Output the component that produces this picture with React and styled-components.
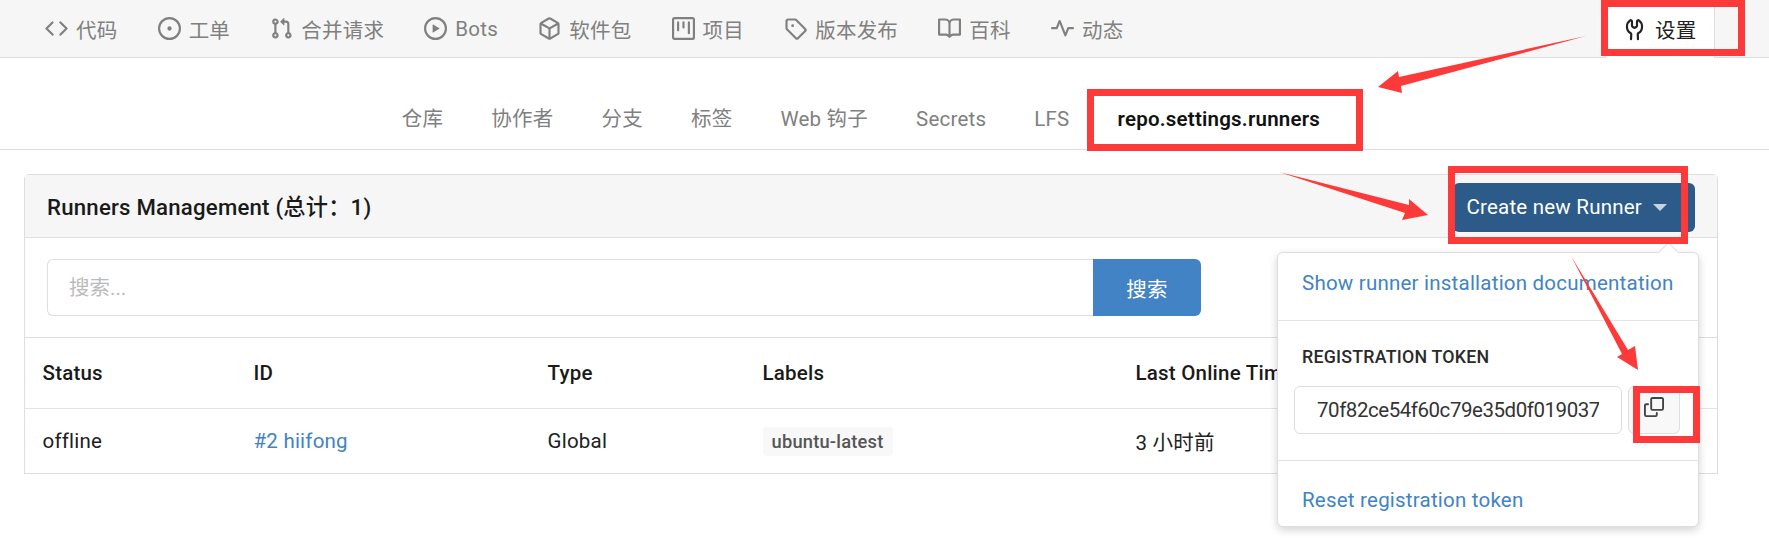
import styled, { createGlobalStyle } from "styled-components";

const FONT = `Roboto, "Noto Sans CJK SC", sans-serif`;
const RED = "#fd3a3a";

const Global = createGlobalStyle`
  * { box-sizing: border-box; }
  html, body { margin: 0; padding: 0; background: #fff; overflow: hidden; }
  body { font-family: ${FONT}; font-size: 20.5px; letter-spacing: 0.22px; color: #212121; }
`;

// octicons, 16 grid
const paths = {
  code: "M4.72 3.22a.75.75 0 011.06 1.06L2.06 8l3.72 3.72a.75.75 0 11-1.06 1.06L.47 8.53a.75.75 0 010-1.06l4.25-4.25zm6.56 0a.75.75 0 10-1.06 1.06L13.94 8l-3.72 3.72a.75.75 0 101.06 1.06l4.25-4.25a.75.75 0 000-1.06l-4.25-4.25z",
  issue: "M8 9.5a1.5 1.5 0 100-3 1.5 1.5 0 000 3zM8 0a8 8 0 100 16A8 8 0 008 0zM1.5 8a6.5 6.5 0 1113 0 6.5 6.5 0 01-13 0z",
  pull: "M7.177 3.073L9.573.677A.25.25 0 0110 .854v4.792a.25.25 0 01-.427.177L7.177 3.427a.25.25 0 010-.354zM3.75 2.5a.75.75 0 100 1.5.75.75 0 000-1.5zm-2.25.75a2.25 2.25 0 113 2.122v5.256a2.251 2.251 0 11-1.5 0V5.372A2.25 2.25 0 011.5 3.25zM11 2.5h-1V4h1a1 1 0 011 1v5.628a2.251 2.251 0 101.5 0V5A2.5 2.5 0 0011 2.5zm1 10.25a.75.75 0 111.5 0 .75.75 0 01-1.5 0zM3.75 12a.75.75 0 100 1.5.75.75 0 000-1.5z",
  play: "M1.5 8a6.5 6.5 0 1113 0 6.5 6.5 0 01-13 0zM8 0a8 8 0 100 16A8 8 0 008 0zM6.379 5.227A.25.25 0 006 5.442v5.117a.25.25 0 00.379.214l4.264-2.559a.25.25 0 000-.428L6.379 5.227z",
  pack: "M8.878.392a1.75 1.75 0 00-1.756 0l-5.25 3.045A1.75 1.75 0 001 4.951v6.098c0 .624.332 1.2.872 1.514l5.25 3.045a1.75 1.75 0 001.756 0l5.25-3.045c.54-.313.872-.89.872-1.514V4.951c0-.624-.332-1.201-.872-1.514L8.878.392zM7.875 1.69a.25.25 0 01.25 0l4.63 2.685L8 7.133 3.245 4.375l4.63-2.685zM2.5 5.677v5.372c0 .09.047.171.125.216l4.625 2.683V8.432L2.5 5.677zm6.25 8.271l4.625-2.683a.25.25 0 00.125-.216V5.677L8.75 8.432v5.516z",
  project: "M1.75 0A1.75 1.75 0 000 1.75v12.5C0 15.216.784 16 1.75 16h12.5A1.75 1.75 0 0016 14.25V1.75A1.75 1.75 0 0014.25 0H1.75zM1.5 1.75a.25.25 0 01.25-.25h12.5a.25.25 0 01.25.25v12.5a.25.25 0 01-.25.25H1.75a.25.25 0 01-.25-.25V1.75zM11.75 3a.75.75 0 00-.75.75v7.5a.75.75 0 001.5 0v-7.5a.75.75 0 00-.75-.75zm-8.25.75a.75.75 0 011.5 0v5.5a.75.75 0 01-1.5 0v-5.5zM8 3a.75.75 0 00-.75.75v3.5a.75.75 0 001.5 0v-3.5A.75.75 0 008 3z",
  tag: "M2.5 7.775V2.75a.25.25 0 01.25-.25h5.025a.25.25 0 01.177.073l6.25 6.25a.25.25 0 010 .354l-5.025 5.025a.25.25 0 01-.354 0l-6.25-6.25a.25.25 0 01-.073-.177zm-1.5 0V2.75C1 1.784 1.784 1 2.75 1h5.025c.464 0 .91.184 1.238.513l6.25 6.25a1.75 1.75 0 010 2.474l-5.026 5.026a1.75 1.75 0 01-2.474 0l-6.25-6.25A1.75 1.75 0 011 7.775zM6 5a1 1 0 100 2 1 1 0 000-2z",
  book: "M0 1.75A.75.75 0 01.75 1h4.253c1.227 0 2.317.59 3 1.501A3.744 3.744 0 0111.006 1h4.245a.75.75 0 01.75.75v10.5a.75.75 0 01-.75.75h-4.507a2.25 2.25 0 00-1.591.659l-.622.621a.75.75 0 01-1.06 0l-.622-.621A2.25 2.25 0 005.258 13H.75a.75.75 0 01-.75-.75V1.75zm8.755 3a2.25 2.25 0 012.25-2.25H14.5v9h-3.757c-.71 0-1.4.201-1.992.572l.004-7.322zm-1.504 7.324l.004-5.073-.002-2.253A2.25 2.25 0 005.003 2.5H1.5v9h3.757a3.75 3.75 0 011.994.574z",
  pulse: "M6 2a.75.75 0 01.696.471L10 10.731l1.304-3.26A.75.75 0 0112 7h3.25a.75.75 0 010 1.5h-2.742l-1.812 4.528a.75.75 0 01-1.392 0L6 4.77 4.696 8.03A.75.75 0 014 8.5H.75a.75.75 0 010-1.5h2.742l1.812-4.529A.75.75 0 016 2z",
  tools: "M5.433 2.304A4.494 4.494 0 003.5 6c0 1.598.832 3.002 2.09 3.802.518.328.929.923.902 1.64v.008l-.164 3.337a.75.75 0 11-1.498-.073l.163-3.33c.002-.085-.05-.216-.207-.316A5.996 5.996 0 012 6a5.994 5.994 0 012.567-4.92 1.482 1.482 0 011.673-.04c.462.296.76.827.76 1.423v2.82c0 .082.041.16.11.206l.75.51a.25.25 0 00.28 0l.75-.51A.25.25 0 009 5.282V2.463c0-.596.298-1.127.76-1.423a1.482 1.482 0 011.673.04A5.994 5.994 0 0114 6a5.996 5.996 0 01-2.786 5.068c-.157.1-.209.23-.207.315l.163 3.33a.75.75 0 11-1.498.074l-.164-3.345c-.027-.717.384-1.312.902-1.64A4.496 4.496 0 0012.5 6a4.494 4.494 0 00-1.933-3.696c-.024.017-.067.067-.067.16v2.818a1.75 1.75 0 01-.767 1.448l-.75.51a1.75 1.75 0 01-1.966 0l-.75-.51A1.75 1.75 0 015.5 5.282V2.463c0-.092-.043-.142-.067-.159z",
  copy: "M0 6.75C0 5.784.784 5 1.75 5h1.5a.75.75 0 010 1.5h-1.5a.25.25 0 00-.25.25v7.5c0 .138.112.25.25.25h7.5a.25.25 0 00.25-.25v-1.5a.75.75 0 011.5 0v1.5A1.75 1.75 0 019.25 16h-7.5A1.75 1.75 0 010 14.25v-7.5zM5 1.75C5 .784 5.784 0 6.75 0h7.5C15.216 0 16 .784 16 1.75v7.5A1.75 1.75 0 0114.25 11h-7.5A1.75 1.75 0 015 9.25v-7.5zm1.75-.25a.25.25 0 00-.25.25v7.5c0 .138.112.25.25.25h7.5a.25.25 0 00.25-.25v-7.5a.25.25 0 00-.25-.25h-7.5z",
};

function Octicon({ name, size = 23 }) {
  return (
    <svg width={size} height={size} viewBox="0 0 16 16" fill="currentColor">
      <path fillRule="evenodd" d={paths[name]} />
    </svg>
  );
}

const repoTabs = [
  { icon: "code", label: "代码" },
  { icon: "issue", label: "工单" },
  { icon: "pull", label: "合并请求" },
  { icon: "play", label: "Bots" },
  { icon: "pack", label: "软件包" },
  { icon: "project", label: "项目" },
  { icon: "tag", label: "版本发布" },
  { icon: "book", label: "百科" },
  { icon: "pulse", label: "动态" },
];

const settingTabs = ["仓库", "协作者", "分支", "标签", "Web 钩子", "Secrets", "LFS"];

export default function App() {
  return (
    <Page>
      <Global />
      <RepoNav>
        <RepoTabs>
          {repoTabs.map(({ icon, label }) => (
            <RepoTab key={label}>
              <Octicon name={icon} />
              {label}
            </RepoTab>
          ))}
        </RepoTabs>
        <SettingsTab>
          <Octicon name="tools" />
          设置
        </SettingsTab>
      </RepoNav>

      <SubNav>
        {settingTabs.map((t) => (
          <SubTab key={t}>{t}</SubTab>
        ))}
        <SubTab $active>repo.settings.runners</SubTab>
      </SubNav>

      <Card>
        <CardHeader>
          <CardTitle>Runners Management (总计：1)</CardTitle>
          <MenuWrap>
            <CreateButton>
              Create new Runner
              <Caret />
            </CreateButton>
            <Dropdown>
              <MenuLink $h={67} $pb={7}>Show runner installation documentation</MenuLink>
              <TokenBox>
                <TokenTitle>REGISTRATION TOKEN</TokenTitle>
                <TokenRow>
                  <TokenInput readOnly value="70f82ce54f60c79e35d0f01903772ab5c1" />
                  <CopyButton>
                    <Octicon name="copy" size={20} />
                  </CopyButton>
                </TokenRow>
              </TokenBox>
              <MenuLink $h={65} $pt={13}>Reset registration token</MenuLink>
            </Dropdown>
          </MenuWrap>
        </CardHeader>

        <SearchBar>
          <SearchInput placeholder="搜索..." />
          <SearchButton>搜索</SearchButton>
        </SearchBar>

        <HeadRow>
          <span>Status</span>
          <span>ID</span>
          <span>Type</span>
          <span>Labels</span>
          <span>Last Online Time</span>
        </HeadRow>
        <BodyRow>
          <span>offline</span>
          <RunnerLink>#2 hiifong</RunnerLink>
          <span>Global</span>
          <span>
            <LabelBadge>ubuntu-latest</LabelBadge>
          </span>
          <span>3 小时前</span>
        </BodyRow>
      </Card>

      <RedBox $x={1601} $y={0} $w={144} $h={56} />
      <RedBox $x={1087} $y={89} $w={276} $h={62} />
      <RedBox $x={1448} $y={166} $w={240} $h={78} />
      <RedBox $x={1633} $y={386} $w={67} $h={57} />

      <Arrows viewBox="0 0 1769 538">
        <polygon fill={RED} points="1586,36 1399,77 1398,71 1378,87 1402,93 1401,86" />
        <polygon fill={RED} points="1279,172 1409,205 1409,199 1428,215 1402,220 1405,213" />
        <polygon fill={RED} points="1571,256 1628,350 1635,346 1638,370 1617,357 1622,354" />
      </Arrows>
    </Page>
  );
}

const Page = styled.div`
  position: relative;
  width: 1769px;
  height: 538px;
  overflow: hidden;
`;

const RepoNav = styled.div`
  display: flex;
  justify-content: space-between;
  height: 58px;
  padding: 0 54px 0 45px;
  background: #f6f6f6;
  border-bottom: 1px solid #dedede;
`;

const RepoTabs = styled.div`
  display: flex;
  align-items: center;
  gap: 40.2px;
`;

const RepoTab = styled.div`
  display: flex;
  align-items: center;
  gap: 8px;
  color: #808080;
  white-space: nowrap;
`;

const SettingsTab = styled.div`
  display: flex;
  align-items: center;
  gap: 9px;
  width: 110px;
  height: 58px;
  padding-left: 17px;
  background: #fff;
  border: 1px solid #dedede;
  border-width: 0 1px;
  color: #212121;
`;

const SubNav = styled.div`
  display: flex;
  justify-content: center;
  height: 92px;
  padding: 32px 47px 0 0;
  border-bottom: 1px solid #dedede;
`;

const SubTab = styled.div`
  padding: 0 24px;
  height: 58px;
  line-height: 58px;
  white-space: nowrap;
  color: ${(p) => (p.$active ? "#111" : "#808080")};
  font-weight: ${(p) => (p.$active ? 600 : 400)};
`;

const Card = styled.div`
  margin: 24px 51px 0 24px;
  border: 1px solid #dedede;
  border-bottom: 0;
  border-radius: 5px 5px 0 0;
`;

const CardHeader = styled.div`
  display: flex;
  align-items: center;
  justify-content: space-between;
  height: 63px;
  padding: 0 22px 0 22px;
  background: #f6f6f6;
  border-bottom: 1px solid #dedede;
`;

const CardTitle = styled.div`
  padding-bottom: 3px;
  font-size: 22.2px;
  font-weight: 500;
  color: #1a1a1a;
`;

const MenuWrap = styled.div`
  position: relative;
  margin-top: 2px;
`;

const CreateButton = styled.div`
  display: flex;
  align-items: center;
  gap: 11px;
  height: 49px;
  padding: 0 28px 0 13px;
  background: #2c5b8a;
  border-radius: 6px;
  color: #fff;
  white-space: nowrap;
`;

const Caret = styled.i`
  width: 0;
  height: 0;
  border: 7px solid transparent;
  border-top: 7px solid #c9d3de;
  border-bottom: 0;
`;

const Dropdown = styled.div`
  position: absolute;
  top: calc(100% + 20px);
  right: -4px;
  width: 422px;
  background: #fff;
  border: 1px solid #dedede;
  border-radius: 6px;
  box-shadow: 0 3px 8px rgba(0, 0, 0, 0.18);
  z-index: 2;

  &::before {
    content: "";
    position: absolute;
    top: -8px;
    right: 22px;
    width: 14px;
    height: 14px;
    background: #fff;
    border: 1px solid #dedede;
    border-width: 1px 0 0 1px;
    transform: rotate(45deg);
  }
`;

const MenuLink = styled.div`
  display: flex;
  align-items: center;
  height: ${(p) => p.$h}px;
  padding: ${(p) => p.$pt || 0}px 0 ${(p) => p.$pb || 0}px 24px;
  color: #4183c4;
  white-space: nowrap;
`;

const TokenBox = styled.div`
  height: 141px;
  padding: 25px 16px 0;
  border: 1px solid #e4e4e4;
  border-width: 1px 0;
`;

const TokenTitle = styled.div`
  padding-left: 8px;
  font-size: 17.8px;
  font-weight: 500;
  line-height: 22px;
  color: #2a2a2a;
`;

const TokenRow = styled.div`
  display: flex;
  gap: 6px;
  margin-top: 18px;
`;

const TokenInput = styled.input`
  width: 328px;
  height: 48px;
  padding: 0 22px;
  border: 1px solid #dedede;
  border-radius: 6px;
  font: 20.5px ${FONT};
  letter-spacing: -0.45px;
  color: #333;
  outline: none;
`;

const CopyButton = styled.div`
  display: flex;
  justify-content: center;
  width: 52px;
  height: 48px;
  padding-top: 10px;
  background: #f8f8f8;
  border: 1px solid #dedede;
  border-radius: 6px;
  color: #444;
`;

const SearchBar = styled.div`
  display: flex;
  height: 100px;
  padding: 21px 22px;
  border-bottom: 1px solid #dedede;
`;

const SearchInput = styled.input`
  width: 1046px;
  height: 57px;
  padding: 0 21px;
  border: 1px solid #dedede;
  border-right: 0;
  border-radius: 6px 0 0 6px;
  font: 20.5px ${FONT};
  outline: none;

  &::placeholder {
    color: #bbb;
  }
`;

const SearchButton = styled.div`
  display: flex;
  align-items: center;
  justify-content: center;
  width: 108px;
  height: 57px;
  background: #4183c4;
  border-radius: 0 6px 6px 0;
  color: #fff;
`;

const Row = styled.div`
  display: grid;
  grid-template-columns: 211px 294px 215px 373px 1fr;
  align-items: center;
  padding-left: 17.5px;
`;

const HeadRow = styled(Row)`
  height: 71px;
  font-weight: 500;
  color: #1a1a1a;
  border-bottom: 1px solid #e4e4e4;
`;

const BodyRow = styled(Row)`
  height: 65px;
  border-bottom: 1px solid #dedede;
`;

const RunnerLink = styled.span`
  color: #4183c4;
`;

const LabelBadge = styled.span`
  display: inline-block;
  height: 29px;
  padding: 0 9px;
  line-height: 29px;
  background: #f8f8f8;
  border-radius: 4px;
  font-size: 18.3px;
  font-weight: 500;
  color: #555;
`;

const RedBox = styled.div`
  position: absolute;
  left: ${(p) => p.$x}px;
  top: ${(p) => p.$y}px;
  width: ${(p) => p.$w}px;
  height: ${(p) => p.$h}px;
  border: 7px solid ${RED};
  z-index: 3;
`;

const Arrows = styled.svg`
  position: absolute;
  inset: 0;
  width: 1769px;
  height: 538px;
  z-index: 4;
`;
